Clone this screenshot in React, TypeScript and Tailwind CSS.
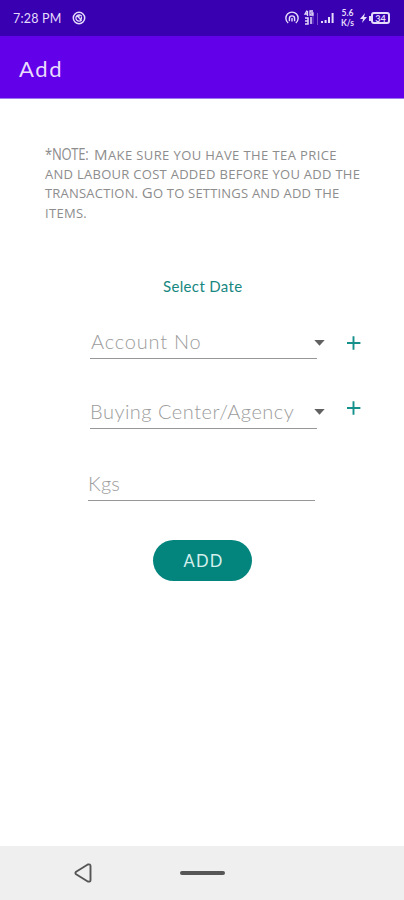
import type { ReactNode } from "react";

const StatusBar = () => (
  <div className="flex h-9 items-center bg-[#3900b2] pl-[13px] text-[#e4dcfa]">
    <span className="w-[49px] whitespace-nowrap pt-[2px] text-[12.5px] tracking-[0.2px]">7:28 PM</span>
    <svg className="ml-[10px] size-[14px]" viewBox="0 0 14 14" fill="none" stroke="currentColor">
      <circle cx="7" cy="7" r="5.7" strokeWidth="1.5" />
      <path d="M9.6 5A3.2 3.2 0 1 0 9.6 9M5 4.6l4 4.4M7 4v2M9.4 5.4v3" strokeWidth="1.3" />
    </svg>
    <svg className="ml-[199px] size-[14px]" viewBox="0 0 14 14" fill="none" stroke="currentColor" strokeWidth="1.4">
      <path d="M3.2 12A6.1 6.1 0 1 1 10.8 12" />
      <path d="M4.4 10.2V7.5a2.6 2.6 0 0 1 5.2 0v2.7" />
      <path d="M7 7v3.5" />
    </svg>
    <svg className="ml-[4px] h-[18px] w-[16px]" viewBox="0 0 16 18" fill="none" stroke="currentColor">
      <path d="M4 1.5 2 5h3M4.5 2v5M10 2H7v4h3V4H8" strokeWidth="1.3" />
      <path d="M2 9h3v3H2m3 0v3H2M8 15V8" strokeWidth="1.5" />
      <path d="M14.5 4v12M10 6v9" strokeWidth="1" opacity=".35" />
    </svg>
    <svg className="ml-[2px] h-[12px] w-[15px]" viewBox="0 0 15 12" fill="currentColor">
      <path d="M0 9h2v2H0zM3.6 8h2v3h-2zM7 5h2v6H7zM10.6 1h2v10h-2z" />
    </svg>
    <span className="ml-[4px] flex h-[19px] w-[15px] flex-col justify-between text-center text-[8.5px] font-bold leading-none">
      <span>5.6</span>
      <span>K/s</span>
    </span>
    <svg className="ml-[5px] h-[12px] w-[8px]" viewBox="0 0 8 12" fill="currentColor">
      <path d="M5 1 0 7h3l-1 4 5-6H4z" />
    </svg>
    <span className="ml-[1px] h-[5px] w-[2px] bg-[#e4dcfa]" />
    <span className="flex h-[12px] w-[19px] items-center justify-center rounded-[3px] border-2 border-[#e4dcfa] text-[9px] font-bold leading-none">
      34
    </span>
  </div>
);

const PlusIcon = () => (
  <svg className="size-[14px]" viewBox="0 0 14 14" stroke="#15908a" strokeWidth="1.9">
    <path d="M6.5 .3v13.4M0 7h13.4" />
  </svg>
);

const Caret = () => (
  <svg className="h-[6px] w-[11px]" viewBox="0 0 11 6" fill="#616161">
    <path d="M.3 0h10.4L5.5 5.8z" />
  </svg>
);

type FieldProps = {
  className: string;
  children: ReactNode;
};

const Field = ({ className, children }: FieldProps) => (
  <div className={`flex h-[34px] w-[227px] items-center border-b border-[#979797] text-[20px] text-[#9c9c9c] ${className}`}>
    {children}
  </div>
);

const Note = () => (
  <p className="ml-[45px] mt-[47px] whitespace-nowrap font-['Open_Sans','Noto_Sans',sans-serif] text-[13px] uppercase leading-[19.2px] text-[#8d8d8d]">
    <span className="block tracking-[0.4px]">
      <span className="inline-block w-[49px] origin-left scale-x-[0.84] text-[15.5px] leading-none tracking-[-0.3px]">*NOTE:</span>
      <span className="text-[15px] leading-none">M</span>ake sure you have the tea price
    </span>
    <span className="block tracking-[0.28px]">and labour cost added before you add the</span>
    <span className="block tracking-[0.2px]">
      transaction. <span className="text-[15px] leading-none">G</span>o to settings and add the
    </span>
    <span className="block tracking-[0.3px]">items.</span>
  </p>
);

const App = () => {
  return (
    <div className="flex h-[900px] w-[404px] flex-col overflow-hidden bg-white font-['Lato','Open_Sans',sans-serif]">
      <StatusBar />
      <header className="flex h-[63px] items-center border-b border-[#9b78ed] bg-[#6200ea] pl-[19px] text-[22px] tracking-[1.7px] text-[#e9ddfc]">
        <h1 className="pt-[2px]">Add</h1>
      </header>
      <main className="flex flex-1 flex-col">
        <Note />
        <button className="ml-[163px] mt-[54px] h-[19px] w-[80px] whitespace-nowrap text-left text-[15px] leading-[19px] tracking-[0.35px] text-[#17877f]">
          Select Date
        </button>
        <div className="ml-[90px] mt-[29px] flex items-start">
          <Field className="tracking-[0.8px]">
            <span className="w-[224px] whitespace-nowrap pl-px font-light">Account No</span>
          </Field>
          <span className="-ml-[3px] mt-[15px]">
            <Caret />
          </span>
          <span className="ml-[22px] mt-[11px]">
            <PlusIcon />
          </span>
        </div>
        <div className="ml-[90px] mt-[36px] flex items-start">
          <Field className="tracking-[0.5px]">
            <span className="w-[224px] whitespace-nowrap font-light">Buying Center/Agency</span>
          </Field>
          <span className="-ml-[3px] mt-[14px]">
            <Caret />
          </span>
          <span className="ml-[22px] mt-[6px]">
            <PlusIcon />
          </span>
        </div>
        <Field className="ml-[88px] mt-[38px] font-light tracking-[0.2px]">Kgs</Field>
        <button className="ml-[153px] mt-[39px] h-[41px] w-[99px] rounded-full bg-[#03857d] pl-[2px] pt-[2px] text-[16.5px] tracking-[1.2px] text-[#d5efed]">
          ADD
        </button>
      </main>
      <nav className="flex h-[54px] items-center bg-[#efefef] pl-[74px]">
        <svg className="h-[20px] w-[18px]" viewBox="0 0 18 20" fill="none" stroke="#555" strokeWidth="1.9" strokeLinejoin="round">
          <path d="M2.1 8.7 13.8 1.5Q16.5 .8 16.5 3v14q0 2.2-2.7 1.5L2.1 11.3Q.7 10 2.1 8.7z" />
        </svg>
        <span className="ml-[88px] h-[4px] w-[45px] rounded-full bg-[#565656]" />
      </nav>
    </div>
  );
};

export default App;
